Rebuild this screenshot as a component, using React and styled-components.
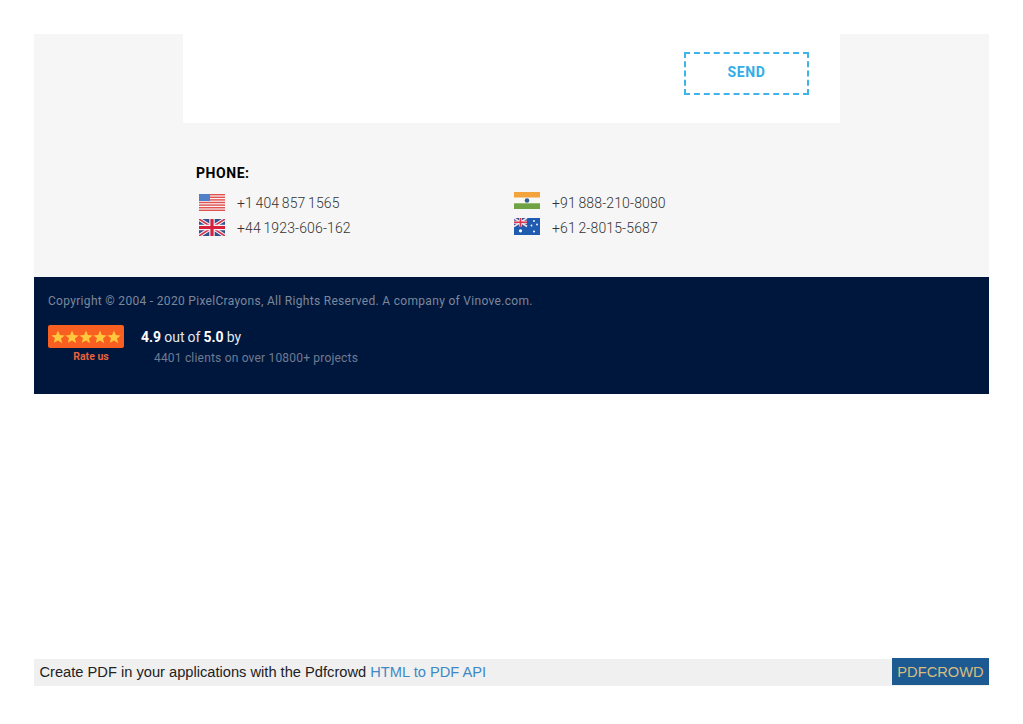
import styled, { createGlobalStyle } from "styled-components";

const GlobalStyle = createGlobalStyle`
  html, body {
    margin: 0;
    padding: 0;
    background: #ffffff;
  }
  * {
    box-sizing: border-box;
  }
`;

const Page = styled.div`
  width: 1023px;
  height: 724px;
  padding: 34px 34px 0;
  font-family: Roboto, "Liberation Sans", sans-serif;
`;

const ContactSection = styled.section`
  background: #f6f6f6;
  height: 243px;
  padding: 0 149px;
`;

const FormCard = styled.div`
  height: 89px;
  background: #ffffff;
  padding: 18px 31px 0 0;
  display: flex;
  justify-content: flex-end;
  align-items: flex-start;
`;

const SendButton = styled.button`
  width: 125px;
  height: 43px;
  background: transparent;
  border: 2px dashed #3fb4e8;
  color: #33ade6;
  font-family: inherit;
  font-size: 14px;
  font-weight: 700;
  letter-spacing: 0.6px;
  padding: 0 0 4px;
`;

const PhoneBlock = styled.div`
  padding: 42px 0 0 13px;
`;

const PhoneTitle = styled.h4`
  margin: 0 0 9px;
  font-size: 14px;
  line-height: 16px;
  font-weight: 700;
  letter-spacing: 0.55px;
  color: #000000;
`;

const PhoneGrid = styled.div`
  display: grid;
  grid-template-columns: 315px 1fr;
  grid-auto-rows: 25.5px;
  padding-left: 3px;
`;

const PhoneRow = styled.div`
  display: flex;
  align-items: center;
  gap: 12px;
  font-size: 14px;
  font-weight: 300;
  letter-spacing: 0.14px;
  word-spacing: -1px;
  color: #333333;
`;

const FlagSlot = styled.span`
  display: block;
  flex: none;
  margin-bottom: ${({ $lift }) => $lift}px;
`;

const FlagIcon = styled.svg`
  width: 26px;
  height: 17px;
  display: block;
`;

const FooterSection = styled.footer`
  height: 117px;
  background: #00173d;
  padding: 16px 14px 0;
`;

const Copyright = styled.p`
  margin: 0 0 16px;
  font-size: 12px;
  line-height: 16px;
  letter-spacing: 0.31px;
  color: #7c879c;
`;

const RatingRow = styled.div`
  display: flex;
  gap: 17px;
`;

const BadgeColumn = styled.div`
  width: 76px;
  display: flex;
  flex-direction: column;
  align-items: center;
`;

const StarBadge = styled.div`
  width: 76px;
  height: 23px;
  background: #f95f20;
  border-radius: 2px;
  display: flex;
  align-items: center;
  justify-content: center;
`;

const RateUs = styled.span`
  margin-top: 2px;
  padding-left: 10px;
  font-size: 10.5px;
  line-height: 14px;
  font-weight: 700;
  color: #e8603c;
`;

const RatingText = styled.div`
  padding-top: 2px;
`;

const Score = styled.div`
  font-size: 14px;
  line-height: 20px;
  letter-spacing: 0;
  word-spacing: -0.4px;
  color: #e4e7ec;

  b {
    font-weight: 700;
    color: #ffffff;
  }
`;

const Clients = styled.div`
  margin: 3px 0 0 13px;
  font-size: 12px;
  line-height: 16px;
  letter-spacing: 0.19px;
  color: #6f7b92;
`;

const PdfBar = styled.div`
  margin-top: 265px;
  height: 27px;
  display: flex;
  background: #f0f0f0;
  font-family: "Liberation Sans", Arial, sans-serif;
  font-size: 14.67px;
`;

const PdfText = styled.div`
  flex: 1;
  padding-left: 5.5px;
  line-height: 27px;
  color: #222222;

  a {
    color: #3f88c5;
    text-decoration: none;
  }
`;

const PdfBrand = styled.div`
  width: 97px;
  height: 27px;
  margin-top: -1px;
  background: #1d5a92;
  color: #d8bd80;
  line-height: 29px;
  text-align: center;
`;

const USFlag = () => (
  <FlagIcon viewBox="0 0 26 17">
    <rect width="26" height="17" fill="#f7f3f3" />
    {[0, 2.6, 5.2, 7.8, 10.4, 13, 15.6].map((y) => (
      <rect key={y} y={y} width="26" height="1.4" fill="#e2504f" />
    ))}
    <rect width="11" height="7" fill="#4f80c8" />
  </FlagIcon>
);

const UKFlag = () => (
  <FlagIcon viewBox="0 0 26 17">
    <rect width="26" height="17" fill="#35508f" />
    <path d="M0 0L26 17M26 0L0 17" stroke="#f2f2f6" strokeWidth="3.6" />
    <path d="M0 0L26 17M26 0L0 17" stroke="#d9344a" strokeWidth="1.6" />
    <path d="M13 0V17M0 8.5H26" stroke="#f2f2f6" strokeWidth="5.4" />
    <path d="M13 0V17M0 8.5H26" stroke="#d8203a" strokeWidth="3.2" />
  </FlagIcon>
);

const IndiaFlag = () => (
  <FlagIcon viewBox="0 0 26 17">
    <rect width="26" height="5.7" fill="#f2a33c" />
    <rect y="5.7" width="26" height="5.6" fill="#f8f8f4" />
    <rect y="11.3" width="26" height="5.7" fill="#6fa343" />
    <circle cx="13" cy="8.5" r="2.3" fill="#2f6192" />
  </FlagIcon>
);

const AustraliaFlag = () => (
  <FlagIcon viewBox="0 0 26 17">
    <rect width="26" height="17" fill="#1f5bb0" />
    <rect width="13" height="8.5" fill="#3c4f90" />
    <path d="M0 0L13 8.5M13 0L0 8.5" stroke="#f0e6ea" strokeWidth="1.6" />
    <path d="M6.5 0V8.5M0 4.25H13" stroke="#f0e6ea" strokeWidth="2.8" />
    <path d="M6.5 0V8.5M0 4.25H13" stroke="#dc3550" strokeWidth="1.6" />
    <circle cx="6.5" cy="12.8" r="1.6" fill="#ffffff" />
    <circle cx="20" cy="3" r="0.9" fill="#ffffff" />
    <circle cx="23" cy="6.5" r="0.9" fill="#ffffff" />
    <circle cx="17.5" cy="7.5" r="0.9" fill="#ffffff" />
    <circle cx="20" cy="13.5" r="1" fill="#ffffff" />
  </FlagIcon>
);

const Star = () => (
  <svg width="14" height="14" viewBox="0 0 24 24">
    <path
      d="M12 1l3.2 7.6 8.2.7-6.2 5.4 1.9 8L12 17.9l-7.1 3.8 1.9-8L.6 9.3l8.2-.7z"
      fill="#ffc83d"
    />
  </svg>
);

const phones = [
  { id: "us", Flag: USFlag, lift: 0, number: "+1 404 857 1565" },
  { id: "in", Flag: IndiaFlag, lift: 4, number: "+91 888-210-8080" },
  { id: "uk", Flag: UKFlag, lift: 2, number: "+44 1923-606-162" },
  { id: "au", Flag: AustraliaFlag, lift: 3, number: "+61 2-8015-5687" },
];

function App() {
  return (
    <Page>
      <GlobalStyle />
      <ContactSection>
        <FormCard>
          <SendButton type="button">SEND</SendButton>
        </FormCard>
        <PhoneBlock>
          <PhoneTitle>PHONE:</PhoneTitle>
          <PhoneGrid>
            {phones.map(({ id, Flag, lift, number }) => (
              <PhoneRow key={id}>
                <FlagSlot $lift={lift}>
                  <Flag />
                </FlagSlot>
                {number}
              </PhoneRow>
            ))}
          </PhoneGrid>
        </PhoneBlock>
      </ContactSection>
      <FooterSection>
        <Copyright>
          Copyright © 2004 - 2020 PixelCrayons, All Rights Reserved. A company of
          Vinove.com.
        </Copyright>
        <RatingRow>
          <BadgeColumn>
            <StarBadge>
              {[1, 2, 3, 4, 5].map((n) => (
                <Star key={n} />
              ))}
            </StarBadge>
            <RateUs>Rate us</RateUs>
          </BadgeColumn>
          <RatingText>
            <Score>
              <b>4.9</b> out of <b>5.0</b> by
            </Score>
            <Clients>4401 clients on over 10800+ projects</Clients>
          </RatingText>
        </RatingRow>
      </FooterSection>
      <PdfBar>
        <PdfText>
          Create PDF in your applications with the Pdfcrowd <a href="#api">HTML to PDF API</a>
        </PdfText>
        <PdfBrand>PDFCROWD</PdfBrand>
      </PdfBar>
    </Page>
  );
}

export default App;
